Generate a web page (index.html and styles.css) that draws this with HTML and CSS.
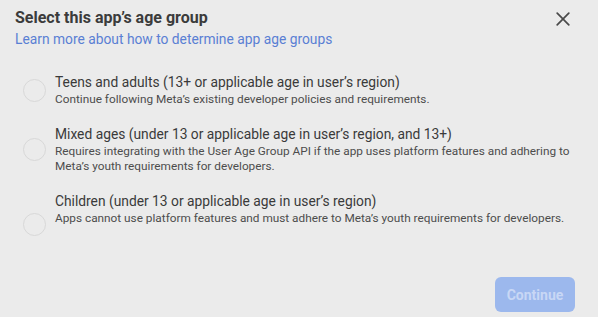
FILE: index.html
```html
<!DOCTYPE html>
<html>
<head>
<meta charset="utf-8">
<link rel="stylesheet" href="styles.css">
</head>
<body>
<div class="dialog">
  <div class="header">
    <div class="heading">
      <div class="title">Select this app’s age group</div>
      <a class="link">Learn more about how to determine app age groups</a>
    </div>
    <div class="close">
      <svg width="14" height="14" viewBox="0 0 14 14"><path d="M1.2 1.2 L12.8 12.8 M12.8 1.2 L1.2 12.8" stroke="#4a4a4a" stroke-width="1.7" stroke-linecap="round"/></svg>
    </div>
  </div>
  <div class="options">
    <div class="option">
      <span class="radio"></span>
      <div class="text">
        <div class="otitle">Teens and adults (13+ or applicable age in user’s region)</div>
        <div class="odesc">Continue following Meta’s existing developer policies and requirements.</div>
      </div>
    </div>
    <div class="option">
      <span class="radio"></span>
      <div class="text">
        <div class="otitle">Mixed ages (under 13 or applicable age in user’s region, and 13+)</div>
        <div class="odesc">Requires integrating with the User Age Group API if the app uses platform features and adhering to Meta’s youth requirements for developers.</div>
      </div>
    </div>
    <div class="option">
      <span class="radio"></span>
      <div class="text text--tall">
        <div class="otitle">Children (under 13 or applicable age in user’s region)</div>
        <div class="odesc">Apps cannot use platform features and must adhere to Meta’s youth requirements for developers.</div>
      </div>
    </div>
  </div>
  <div class="footer">
    <button class="btn">Continue</button>
  </div>
</div>
</body>
</html>
```
FILE: styles.css
```css
html, body {
  margin: 0;
  padding: 0;
  background: #ebebeb;
}
body {
  font-family: Roboto, "Liberation Sans", sans-serif;
  width: 598px;
  height: 317px;
  overflow: hidden;
}
.dialog {
  padding: 8px 23px 5px 15px;
  box-sizing: border-box;
  height: 317px;
  display: flex;
  flex-direction: column;
}
.header {
  display: flex;
  justify-content: space-between;
  align-items: flex-start;
}
.title {
  font-size: 16px;
  font-weight: 700;
  color: #3b3b3b;
  line-height: 20px;
}
.link {
  display: block;
  font-size: 13.8px;
  color: #5a7fd4;
  line-height: 20px;
  margin-top: 1px;
}
.close {
  margin-top: 4px;
  margin-right: 5px;
  width: 14px;
  height: 14px;
}
.close svg {
  display: block;
}
.options {
  margin-top: 24px;
  display: flex;
  flex-direction: column;
  gap: 18px;
}
.option {
  display: flex;
  align-items: center;
  gap: 9px;
}
.radio {
  flex: none;
  width: 23px;
  height: 23px;
  border: 1.5px solid #d8d8d8;
  border-radius: 50%;
  margin-left: 8px;
  box-sizing: border-box;
}
.text--tall {
  padding-bottom: 30px;
}
.otitle {
  font-size: 13.8px;
  color: #3a3a3a;
  line-height: 18px;
}
.odesc {
  font-size: 11.8px;
  color: #4d4d4d;
  line-height: 15px;
  margin-top: 1px;
}
.footer {
  margin-top: auto;
  display: flex;
  justify-content: flex-end;
}
.btn {
  width: 80px;
  height: 35px;
  border: none;
  border-radius: 6px;
  background: #9cb8ed;
  color: #c8d7f5;
  font-family: Roboto, "Liberation Sans", sans-serif;
  font-size: 14px;
  font-weight: 700;
}
```
